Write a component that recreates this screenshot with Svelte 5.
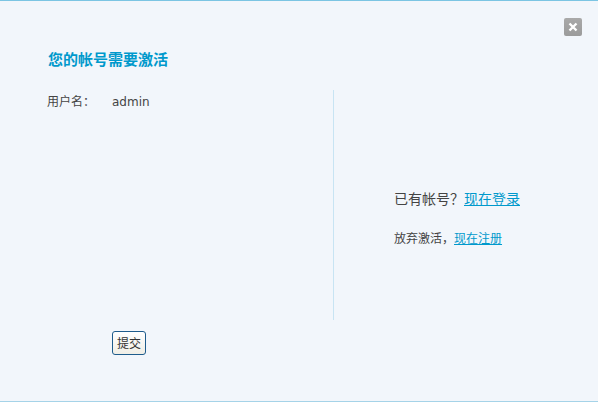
<script>
  let username = 'admin';
</script>

<div class="dialog">
  <button class="close" aria-label="关闭">
    <svg width="10" height="10" viewBox="0 0 10 10">
      <path d="M1.5 1.5 L8.5 8.5 M8.5 1.5 L1.5 8.5" stroke="#fff" stroke-width="2.4" fill="none" />
    </svg>
  </button>

  <h3 class="title">您的帐号需要激活</h3>

  <div class="body">
    <div class="form">
      <div class="row">
        <span class="label">用户名：</span>
        <span class="value">{username}</span>
      </div>
    </div>
    <div class="side">
      <p class="login">已有帐号？<a href="#login">现在登录</a></p>
      <p class="register">放弃激活，<a href="#register">现在注册</a></p>
    </div>
  </div>

  <div class="footer">
    <button class="submit">提交</button>
  </div>
</div>

<style>
  :global(body) {
    margin: 0;
    font-family: "Liberation Sans", "Noto Sans CJK SC", sans-serif;
  }

  .dialog {
    position: relative;
    box-sizing: border-box;
    width: 598px;
    height: 402px;
    padding-top: 51px;
    background: #f2f6fb;
    border-top: 1px solid #7cc5e3;
    border-bottom: 1px solid #a5d3e8;
    color: #444;
    font-size: 12px;
  }

  .close {
    position: absolute;
    top: 17px;
    left: 564px;
    width: 18px;
    height: 18px;
    padding: 0;
    display: flex;
    align-items: center;
    justify-content: center;
    background: linear-gradient(#a9a9a9, #9b9b9b);
    border: 0;
    border-radius: 2px;
  }

  .title {
    margin: 0 0 0 48px;
    height: 16px;
    line-height: 16px;
    font-size: 15px;
    font-weight: 700;
    color: #0099cc;
  }

  .body {
    display: flex;
    height: 230px;
    margin-top: 22px;
  }

  .form {
    box-sizing: border-box;
    width: 334px;
    padding: 4px 0 0 47px;
    border-right: 1px solid #c8e4f3;
  }

  .row {
    display: flex;
    line-height: 16px;
  }

  .label {
    width: 65px;
  }

  .value {
    font-family: "DejaVu Sans", sans-serif;
    font-size: 12px;
  }

  .side {
    flex: 1;
    padding: 100px 0 0 60px;
  }

  .side p {
    margin: 0;
  }

  .login {
    height: 18px;
    line-height: 18px;
    font-size: 14px;
  }

  .register {
    margin-top: 23px !important;
    height: 16px;
    line-height: 16px;
  }

  a {
    color: #0099cc;
    text-decoration: underline;
  }

  .footer {
    padding: 11px 0 0 112px;
  }

  .submit {
    box-sizing: border-box;
    width: 34px;
    height: 24px;
    padding: 0 0 2px;
    font-family: inherit;
    font-size: 12px;
    color: #333;
    background: linear-gradient(#ffffff, #f0eee6);
    border: 1px solid #1f5c8c;
    border-radius: 3px;
  }
</style>
